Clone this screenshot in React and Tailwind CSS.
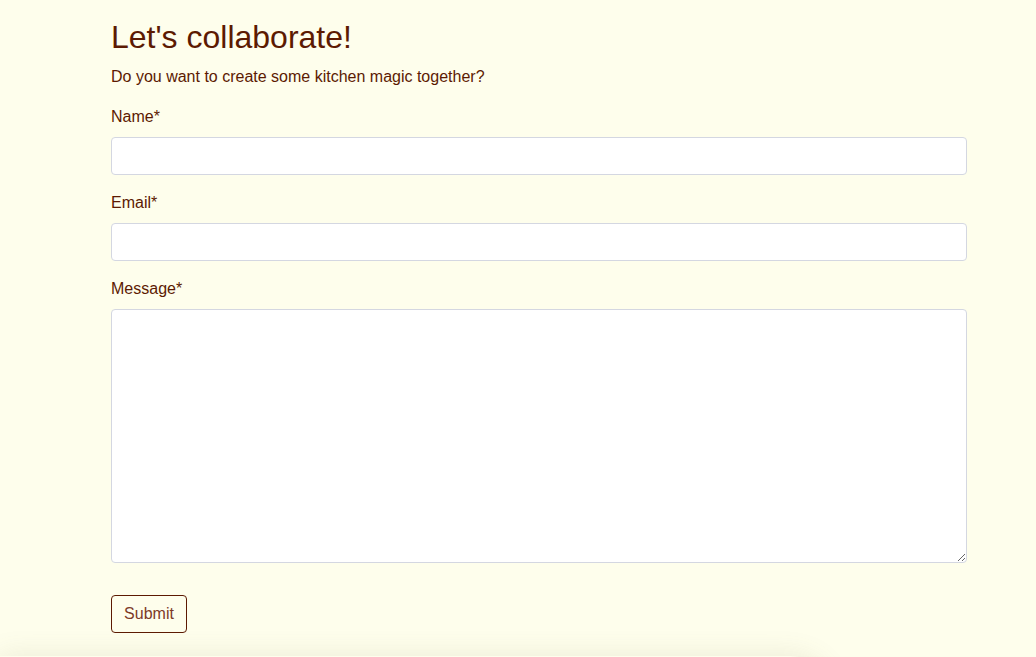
export default function App() {
  return (
    <div className="min-h-screen bg-[#fefeec] font-['Liberation_Sans',Arial,sans-serif] text-[#5c1a02]">
      <div className="w-[856px] ml-[111px] pt-[18px]">
        <h2 className="text-[32px] leading-[1.2] mb-[9px]">Let's collaborate!</h2>
        <p className="text-base leading-6 mb-4">
          Do you want to create some kitchen magic together?
        </p>

        <form onSubmit={(e) => e.preventDefault()}>
          <div className="mb-4">
            <label className="block text-base leading-6 mb-2">Name*</label>
            <input
              type="text"
              className="block w-full h-[38px] rounded border border-[#d4d7e1] bg-white px-3"
            />
          </div>
          <div className="mb-4">
            <label className="block text-base leading-6 mb-2">Email*</label>
            <input
              type="email"
              className="block w-full h-[38px] rounded border border-[#d4d7e1] bg-white px-3"
            />
          </div>
          <div>
            <label className="block text-base leading-6 mb-2">Message*</label>
            <textarea className="block w-full h-[254px] rounded border border-[#d4d7e1] bg-white px-3 py-1.5" />
          </div>

          <button
            type="submit"
            className="mt-[32px] h-[38px] w-[76px] rounded border border-[#5c1a02] text-base text-[#7d3a28]"
          >
            Submit
          </button>
        </form>
      </div>

      <div className="mt-[23px] w-[830px] h-[60px] rounded-tr-[40px] shadow-[0_0_28px_rgba(120,120,80,0.14)]" />
    </div>
  );
}
